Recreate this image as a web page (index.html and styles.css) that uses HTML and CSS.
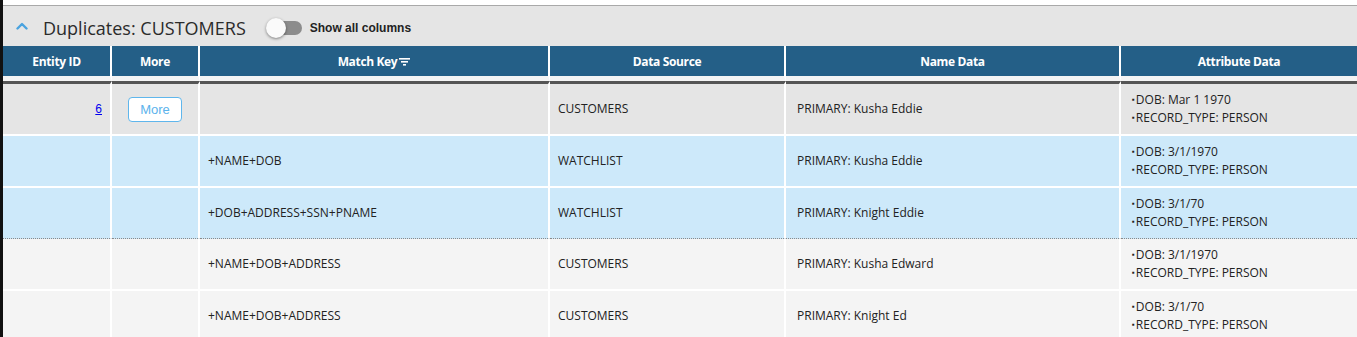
FILE: index.html
```html
<!DOCTYPE html>
<html>
<head>
<meta charset="utf-8">
<title>Duplicates</title>
<link rel="stylesheet" href="styles.css">
</head>
<body>
<div class="page">
  <div class="panel">
    <div class="panel-head">
      <svg class="chev" width="12" height="8" viewBox="0 0 12 8"><path d="M1.5 6.5 L6 2 L10.5 6.5" fill="none" stroke="#4aa3df" stroke-width="2.4" stroke-linecap="round" stroke-linejoin="round"/></svg>
      <h2 class="title">Duplicates: CUSTOMERS</h2>
      <span class="toggle"><span class="track"></span><span class="thumb"></span></span>
      <span class="toggle-label">Show all columns</span>
    </div>
    <table class="grid">
      <thead>
        <tr>
          <th class="c-id">Entity ID</th>
          <th class="c-more">More</th>
          <th class="c-key">Match Key<svg class="filter" width="11" height="8" viewBox="0 0 11 8"><rect x="0" y="0" width="11" height="1.6" fill="#fff"/><rect x="2" y="3" width="7" height="1.6" fill="#fff"/><rect x="4" y="6" width="3" height="1.6" fill="#fff"/></svg></th>
          <th class="c-src">Data Source</th>
          <th class="c-name">Name Data</th>
          <th class="c-attr">Attribute Data</th>
        </tr>
      </thead>
      <tbody>
        <tr class="r-main">
          <td class="id"><a href="#">6</a></td>
          <td class="more"><button class="more-btn">More</button></td>
          <td></td>
          <td>CUSTOMERS</td>
          <td class="name">PRIMARY: Kusha Eddie</td>
          <td class="attr"><div><span class="b">▪</span>DOB: Mar 1 1970</div><div><span class="b">▪</span>RECORD_TYPE: PERSON</div></td>
        </tr>
        <tr class="r-blue">
          <td></td>
          <td></td>
          <td>+NAME+DOB</td>
          <td>WATCHLIST</td>
          <td class="name">PRIMARY: Kusha Eddie</td>
          <td class="attr"><div><span class="b">▪</span>DOB: 3/1/1970</div><div><span class="b">▪</span>RECORD_TYPE: PERSON</div></td>
        </tr>
        <tr class="r-blue r-sep">
          <td></td>
          <td></td>
          <td>+DOB+ADDRESS+SSN+PNAME</td>
          <td>WATCHLIST</td>
          <td class="name">PRIMARY: Knight Eddie</td>
          <td class="attr"><div><span class="b">▪</span>DOB: 3/1/70</div><div><span class="b">▪</span>RECORD_TYPE: PERSON</div></td>
        </tr>
        <tr class="r-light">
          <td></td>
          <td></td>
          <td>+NAME+DOB+ADDRESS</td>
          <td>CUSTOMERS</td>
          <td class="name">PRIMARY: Kusha Edward</td>
          <td class="attr"><div><span class="b">▪</span>DOB: 3/1/1970</div><div><span class="b">▪</span>RECORD_TYPE: PERSON</div></td>
        </tr>
        <tr class="r-light">
          <td></td>
          <td></td>
          <td>+NAME+DOB+ADDRESS</td>
          <td>CUSTOMERS</td>
          <td class="name">PRIMARY: Knight Ed</td>
          <td class="attr"><div><span class="b">▪</span>DOB: 3/1/70</div><div><span class="b">▪</span>RECORD_TYPE: PERSON</div></td>
        </tr>
      </tbody>
    </table>
  </div>
</div>
</body>
</html>
```

FILE: styles.css
```css
html, body {
  margin: 0;
  padding: 0;
  background: #fff;
  overflow: hidden;
}
body {
  font-family: "Open Sans", "Liberation Sans", sans-serif;
  color: #222;
}
.page {
  border-left: 3px solid #111;
  padding-top: 5px;
  min-height: 337px;
  box-sizing: border-box;
}
.panel {
  border-top: 1px solid #a9a9a9;
  background: #e5e5e5;
}
.panel-head {
  height: 40px;
  box-sizing: border-box;
  padding-top: 3px;
  display: flex;
  align-items: center;
  padding-left: 13px;
}
.chev {
  display: block;
  margin-right: 15px;
  margin-top: -4px;
}
.title {
  margin: 0;
  font-size: 18px;
  font-weight: 400;
  color: #2b2b2b;
  letter-spacing: 0;
}
.toggle {
  position: relative;
  width: 36px;
  height: 20px;
  margin-left: 20px;
  display: inline-block;
}
.track {
  position: absolute;
  left: 4px;
  top: 3px;
  width: 32px;
  height: 14px;
  border-radius: 7px;
  background: #8c8c8c;
}
.thumb {
  position: absolute;
  left: 0;
  top: 0;
  width: 20px;
  height: 20px;
  border-radius: 50%;
  background: #fafafa;
  box-shadow: 0 1px 3px rgba(0,0,0,0.45);
}
.toggle-label {
  margin-left: 8px;
  font-family: "Liberation Sans", Arial, sans-serif;
  font-weight: 700;
  font-size: 12px;
  color: #222;
}
.grid {
  width: 1354px;
  table-layout: fixed;
  border-collapse: separate;
  border-spacing: 0;
}
.grid th, .grid td {
  box-sizing: border-box;
  border-right: 2px solid #fff;
  padding: 0 8px;
  font-size: 12px;
}
.grid th:last-child, .grid td:last-child {
  border-right: none;
}
.grid th {
  height: 35px;
  background: #245f87;
  color: #fff;
  font-weight: 700;
  text-align: center;
  border-bottom: 5px solid #f4f4f4;
  letter-spacing: -0.35px;
  padding-top: 1px;
}
.c-id { width: 109px; }
.c-more { width: 88px; }
.c-key { width: 350px; }
.c-src { width: 236px; }
.c-name { width: 335px; }
.filter {
  margin-left: 2px;
  vertical-align: 0px;
}
.grid td {
  height: 52px;
  border-bottom: 2px solid #fff;
  vertical-align: middle;
  white-space: nowrap;
  padding-bottom: 1px;
}
.r-main td {
  background: #e5e5e5;
  height: 55px;
  border-top: 3px solid #555;
}
.r-blue td {
  background: #cde9fa;
}
.r-sep td {
  border-bottom: 1px dotted #8a8a8a;
  height: 51px;
}
.r-light td {
  background: #f4f4f4;
}
td.id {
  text-align: right;
  padding-right: 8px;
}
td.id a {
  color: #0000ee;
  font-family: "Liberation Sans", Arial, sans-serif;
}
td.more {
  text-align: center;
}
.more-btn {
  width: 54px;
  height: 25px;
  background: #fff;
  border: 1px solid #5fb6ec;
  border-radius: 4px;
  color: #5cb3ec;
  font-family: "Liberation Sans", Arial, sans-serif;
  font-size: 13px;
  padding: 0;
  margin-top: 1px;
}
td.name, td.attr {
  padding-left: 11px;
}
td.attr div {
  line-height: 17px;
}
td.attr {
  padding-bottom: 3px;
}
.b {
  font-size: 8px;
  vertical-align: 2px;
  margin-right: 1px;
}
```
